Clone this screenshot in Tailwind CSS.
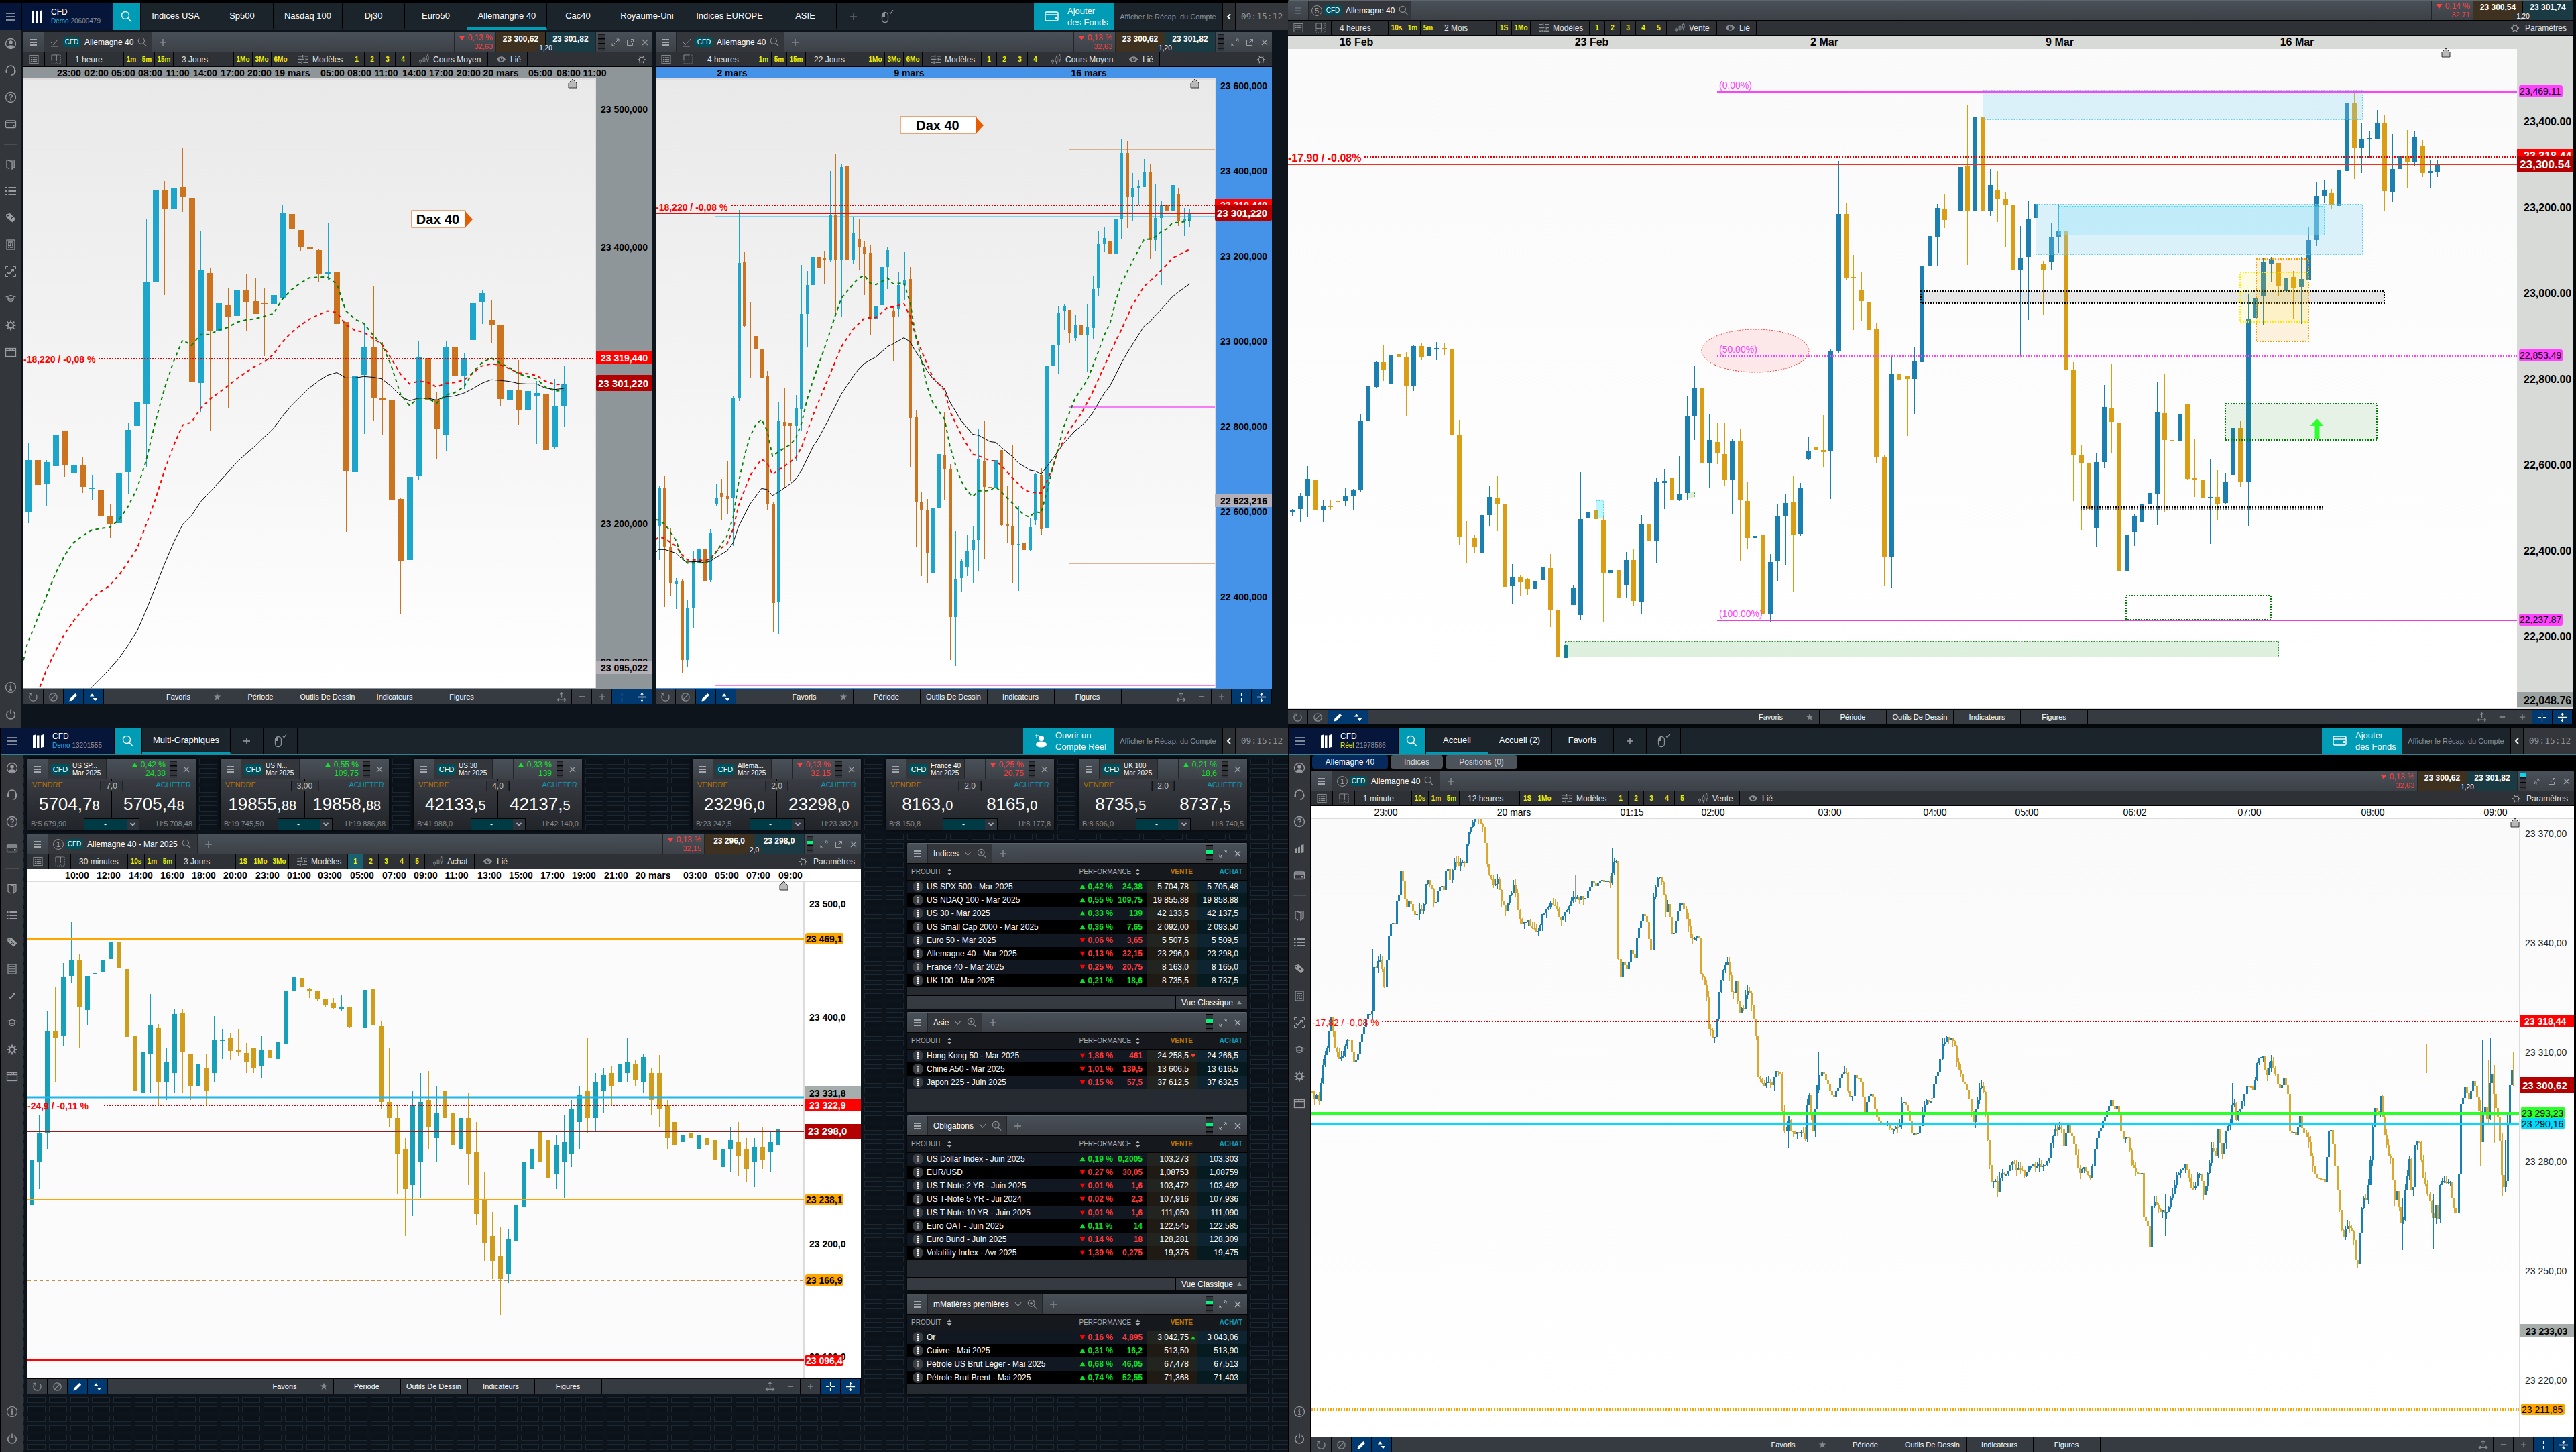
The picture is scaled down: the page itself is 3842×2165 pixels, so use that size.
<!DOCTYPE html>
<html lang="fr">
<head>
  <meta charset="UTF-8">
  <meta name="viewport" content="width=device-width, initial-scale=1.0">
  <title>Trading desk - Allemagne 40</title>
  <script src="https://cdn.jsdelivr.net/npm/@tailwindcss/browser@4"></script>
</head>
<body class="bg-black font-['Liberation_Sans',Arial,sans-serif] text-[12px] leading-4 text-white">

  <!-- icon sprite -->
  <svg class="hidden" xmlns="http://www.w3.org/2000/svg">
    <symbol id="menu" viewBox="0 0 16 16"><path d="M1 3h14M1 8h14M1 13h14" stroke="currentColor" stroke-width="1.6"/></symbol>
    <symbol id="menu-s" viewBox="0 0 12 12"><path d="M1 2h10M1 6h10M1 10h10" stroke="currentColor" stroke-width="1.6"/></symbol>
    <symbol id="logo" viewBox="0 0 18 20"><path d="M1 1.5l4-1V20H1zM7 1.5h3.500V20H7zM13 1.500l4-1.500V19l-4 1z" fill="#fff"/></symbol>
    <symbol id="search" viewBox="0 0 18 18"><circle cx="7" cy="7" r="5.500" fill="none" stroke="currentColor" stroke-width="1.400"/><path d="M11 11.500l5 5" stroke="currentColor" stroke-width="1.500"/></symbol>
    <symbol id="zoom" viewBox="0 0 18 18"><circle cx="7" cy="7" r="5.500" fill="none" stroke="currentColor" stroke-width="1.300"/><path d="M11 11.500l5 5M4.500 7h5M7 4.500v5" stroke="currentColor" stroke-width="1.300"/></symbol>
    <symbol id="plus" viewBox="0 0 12 12"><path d="M6 1v10M1 6h10" stroke="currentColor" stroke-width="1.500"/></symbol>
    <symbol id="minus" viewBox="0 0 12 12"><path d="M1 6h10" stroke="currentColor" stroke-width="2"/></symbol>
    <symbol id="close" viewBox="0 0 12 12"><path d="M2 2l8 8M10 2l-8 8" stroke="currentColor" stroke-width="1.200"/></symbol>
    <symbol id="expand" viewBox="0 0 12 12"><path d="M7 5l4-4M7.500 1H11v3.500M5 7l-4 4M1 7.500V11h3.500" fill="none" stroke="currentColor"/></symbol>
    <symbol id="shrink" viewBox="0 0 12 12"><path d="M11 1L7 5M7 1.500V5h3.500M1 11l4-4M1.500 7H5v3.500" fill="none" stroke="currentColor"/></symbol>
    <symbol id="popout" viewBox="0 0 12 12"><path d="M5 2.500H1.500v8h8V7M5.500 6.500L10.500 1.500M7 1.500h3.500V5" fill="none" stroke="currentColor"/></symbol>
    <symbol id="mouse" viewBox="0 0 20 20"><path d="M2.500 8a4.500 4.500 0 019 0v6a4.500 4.500 0 01-9 0z" fill="none" stroke="currentColor" stroke-width="1.300"/><path d="M3 10V7a4 4 0 014-3.500V10z" fill="currentColor"/><path d="M14 3l1.500 2L19 0" fill="none" stroke="currentColor" stroke-width="1.200"/></symbol>
    <symbol id="wallet" viewBox="0 0 22 18"><rect x="1" y="2" width="19" height="13" rx="2" fill="none" stroke="currentColor" stroke-width="1.400"/><path d="M1 6h19" stroke="currentColor" stroke-width="1.400"/><rect x="15" y="9" width="3" height="3" fill="currentColor"/></symbol>
    <symbol id="person-add" viewBox="0 0 20 22"><circle cx="11" cy="7" r="4" fill="currentColor"/><ellipse cx="11" cy="16" rx="8" ry="4.500" fill="currentColor"/><path d="M4 0v6M1 3h6" stroke="currentColor"/></symbol>
    <symbol id="user" viewBox="0 0 18 18"><circle cx="9" cy="9" r="7.500" fill="none" stroke="currentColor" stroke-width="1.300"/><circle cx="9" cy="7" r="2.800" fill="currentColor"/><path d="M4 13.500c1-3 9-3 10 0-2.500 3-7.500 3-10 0z" fill="currentColor"/></symbol>
    <symbol id="headset" viewBox="0 0 18 18"><path d="M3 10.500V8a6 6 0 0112 0v3c0 3-2 5-5 5" fill="none" stroke="currentColor" stroke-width="1.600"/><rect x="1.500" y="8" width="2.500" height="5" rx="1" fill="currentColor"/><rect x="14" y="8" width="2.500" height="5" rx="1" fill="currentColor"/></symbol>
    <symbol id="help" viewBox="0 0 18 18"><circle cx="9" cy="9" r="7.500" fill="none" stroke="currentColor" stroke-width="1.300"/><path d="M6.700 7.200c0-3.200 4.800-3 4.600 0-.1 1.600-2.300 1.500-2.300 3.300M9 12v1.500" fill="none" stroke="currentColor" stroke-width="1.600"/></symbol>
    <symbol id="card" viewBox="0 0 18 18"><rect x="1.500" y="4" width="15" height="10.500" rx="1.500" fill="none" stroke="currentColor" stroke-width="1.300"/><path d="M2 7h14" stroke="currentColor" stroke-width="1.500"/><rect x="12" y="10" width="2.500" height="2.500" fill="currentColor"/></symbol>
    <symbol id="bars" viewBox="0 0 18 18"><path d="M2 10l3-1v7H2zM7 7.500l3-1V16H7zM12 4l3.500-1v12L12 16z" fill="currentColor"/></symbol>
    <symbol id="book" viewBox="0 0 18 18"><path d="M3 2.500h12v10.500l-4 3V5L3 2.500v11l4 2.500" fill="none" stroke="currentColor" stroke-width="1.200"/><path d="M5 3l6 2v11l4-3V3z" fill="currentColor" opacity=".5"/></symbol>
    <symbol id="list" viewBox="0 0 18 18"><path d="M5.500 4H17M5.500 9H17M5.500 14H17M1 4h2.500M1 9h2.500M1 14h2.500" stroke="currentColor" stroke-width="1.800"/></symbol>
    <symbol id="tag" viewBox="0 0 18 18"><path d="M2 3.500L8 2l8.500 8.500-5 5L2.500 8z" fill="currentColor"/><circle cx="4.800" cy="5.200" r="1.200" fill="#33363b"/><path d="M8 7l4 4M8 10.500c2 1 1-3 4-2" stroke="#33363b" fill="none"/></symbol>
    <symbol id="calc" viewBox="0 0 18 18"><rect x="3" y="2" width="12" height="14" fill="none" stroke="currentColor" stroke-width="1.200"/><path d="M5 5h8M5 8h2M8 8h2M11 8h2M5 10.500h5M11 10.500h2M5 13h2M8 13h5" stroke="currentColor" stroke-width="1.500"/></symbol>
    <symbol id="trend" viewBox="0 0 18 18"><path d="M1.500 5V1.500H5M13 1.500h3.500V5M16.500 13v3.500H13M5 16.500H1.500V13" fill="none" stroke="currentColor"/><path d="M4 10l2.500 2.500 6-6.500" fill="none" stroke="currentColor" stroke-width="1.700"/><path d="M9.500 5H14v4z" fill="currentColor"/></symbol>
    <symbol id="grad" viewBox="0 0 18 18"><path d="M1.500 7L9 4.500 16.500 7M5 6.500v5c2 2.500 6 2.500 8 0v-5M5 9c2 1.500 6 1.500 8 0" fill="none" stroke="currentColor" stroke-width="1.300"/></symbol>
    <symbol id="gear" viewBox="0 0 18 18"><circle cx="9" cy="9" r="4" fill="none" stroke="currentColor" stroke-width="2.200"/><path d="M9 1.500v3M9 13.500v3M1.500 9h3M13.500 9h3M3.700 3.700l2 2M12.300 12.300l2 2M3.700 14.300l2-2M12.300 5.700l2-2" stroke="currentColor" stroke-width="1.800"/></symbol>
    <symbol id="window" viewBox="0 0 18 18"><rect x="1.500" y="3.500" width="15" height="12" fill="none" stroke="currentColor" stroke-width="1.300"/><path d="M1.500 6.500h15M8 4v2M11.500 4v2" stroke="currentColor" stroke-width="1.300"/></symbol>
    <symbol id="info" viewBox="0 0 18 18"><circle cx="9" cy="9" r="7.500" fill="none" stroke="currentColor" stroke-width="1.200"/><path d="M9 4.500v2M7.500 8H9v5M7 13h4" fill="none" stroke="currentColor" stroke-width="1.600"/></symbol>
    <symbol id="power" viewBox="0 0 18 18"><path d="M5.500 4.500a6.300 6.300 0 107 0M9 1.500V8" fill="none" stroke="currentColor" stroke-width="1.500"/></symbol>
    <symbol id="doc" viewBox="0 0 16 16"><rect x="1" y="1.500" width="14" height="13" fill="none" stroke="currentColor"/><path d="M3 5h2M6 5h7M3 8h2M6 8h7M3 11h2M6 11h7" stroke="currentColor" stroke-width="1.200"/></symbol>
    <symbol id="layout" viewBox="0 0 16 16"><path d="M1 1h8v8H1z" fill="none" stroke="currentColor"/><path d="M9 1h6v14H1V9M9 9v6M9 9h6" fill="none" stroke="currentColor" stroke-dasharray="1.500 1.500"/></symbol>
    <symbol id="sliders" viewBox="0 0 16 16"><path d="M0 3h6M10 3h6M0 8h9M13 8h3M0 13h4M8 13h8" stroke="currentColor" stroke-width="1.500"/><path d="M7 1v4M12 6v4M5.500 11v4" stroke="currentColor" stroke-width="1.500"/></symbol>
    <symbol id="ohlc" viewBox="0 0 16 16"><path d="M2 8v1M2 13v2M8 2v3M8 12v3M13.500 0v2M13.500 9v3" stroke="currentColor"/><path d="M.8 9.500h2.800v3H.8zM6.500 5.500h3v6h-3zM12 2.500h3v6h-3z" fill="none" stroke="currentColor"/></symbol>
    <symbol id="eye" viewBox="0 0 16 16"><path d="M1 8c3.500-6 10.500-6 14 0-3.500 6-10.500 6-14 0z" fill="currentColor"/><circle cx="8" cy="8" r="3" fill="#2e3236"/><circle cx="8.800" cy="7" r="1.300" fill="currentColor"/></symbol>
    <symbol id="cog" viewBox="0 0 16 16"><circle cx="8" cy="8" r="4.300" fill="none" stroke="currentColor" stroke-width="1.300"/><path d="M1 8h2.500M12.500 8H15M4.500 2l1.200 2M11.500 2l-1.200 2M4.500 14l1.200-2M11.500 14l-1.200-2" stroke="currentColor" stroke-width="1.500"/></symbol>
    <symbol id="undo" viewBox="0 0 16 16"><path d="M12.500 4a6 6 0 11-8.500-.5M1.500 2.500h4v4" fill="none" stroke="currentColor" stroke-width="1.500"/></symbol>
    <symbol id="ban" viewBox="0 0 16 16"><circle cx="8" cy="8" r="6" fill="none" stroke="currentColor" stroke-width="1.400"/><path d="M4 12l8-8" stroke="currentColor" stroke-width="1.400"/></symbol>
    <symbol id="pencil" viewBox="0 0 16 16"><path d="M1.500 14.500l1-4L11 2l3 3-8.500 8.500z" fill="#fff"/></symbol>
    <symbol id="updown" viewBox="0 0 16 16"><path d="M2 7l3.500-4.500L9 7zM7 9.500h7L10.500 14z" fill="#fff"/></symbol>
    <symbol id="star" viewBox="0 0 16 16"><path d="M8 1l2 5h5l-4 3.300 1.500 5.200L8 11.400l-4.500 3.100L5 9.300 1 6h5z" fill="currentColor"/></symbol>
    <symbol id="measure" viewBox="0 0 16 16"><path d="M8 1v8M5.500 3.500L8 1l2.500 2.500M2 12h12M4 9.500L1.500 12 4 14.500M12 9.500l2.500 2.500-2.500 2.500" fill="none" stroke="currentColor" stroke-width="1.500"/></symbol>
    <symbol id="cross" viewBox="0 0 16 16"><path d="M8 1v5.500M8 9.500V15M1 8h5.500M9.500 8H15" stroke="#fff" stroke-width="1.200"/></symbol>
    <symbol id="vsplit" viewBox="0 0 16 16"><path d="M1 8h14M8 1v5M8 10v5" stroke="#fff" stroke-width="1.400"/><path d="M5.500 4L8 .8 10.500 4zM5.500 12L8 15.200l2.500-3.200z" fill="#fff"/></symbol>
    <symbol id="check" viewBox="0 0 14 14"><path d="M1 7l3.500 3.500L12 2M1 13h10" fill="none" stroke="currentColor"/></symbol>
    <symbol id="chev-d" viewBox="0 0 12 12"><path d="M1 3.500L6 9l5-5.500" fill="none" stroke="currentColor" stroke-width="1.200"/></symbol>
    <symbol id="chev-d-b" viewBox="0 0 10 10"><path d="M1.500 3L5 6.500 8.500 3" fill="none" stroke="currentColor" stroke-width="1.800"/></symbol>
    <symbol id="chev-l" viewBox="0 0 10 10"><path d="M7 1L3 5l4 4" fill="none" stroke="currentColor" stroke-width="1.800"/></symbol>
    <symbol id="sort" viewBox="0 0 8 10"><path d="M4 0l3.500 4h-7zM.5 6h7L4 10z" fill="currentColor"/></symbol>
    <symbol id="tri-u" viewBox="0 0 10 10"><path d="M5 1l5 8H0z" fill="currentColor"/></symbol>
    <symbol id="tri-d" viewBox="0 0 10 10"><path d="M5 9l5-8H0z" fill="currentColor"/></symbol>
    <symbol id="dots" viewBox="0 0 16 16"><circle cx="8" cy="8" r="8" fill="#3a3d41"/><path d="M8 3v10" stroke="#fff" stroke-width="2" stroke-dasharray="1.800 1"/></symbol>
  </svg>

  <div class="grid h-screen grid-cols-2 grid-rows-[1085fr_1080fr] overflow-hidden">
    <section class="flex min-h-0 min-w-0 flex-col border-t-[5px] border-black bg-[#0d141c]">
      <div id="tl-bar"></div>
      <div class="flex min-h-0 flex-1">
        <nav id="tl-nav" class="flex w-8 flex-col bg-[#33363b] text-[#9a9da0]"></nav>
        <main class="grid min-h-0 flex-1 grid-cols-[938fr_919fr] gap-[5px] pt-[2px] pr-6 pb-[35px] pl-[3px]">
          <article id="p1" class="flex min-h-0 min-w-0 flex-col"></article>
          <article id="p2" class="flex min-h-0 min-w-0 flex-col"></article>
        </main>
      </div>
    </section>

    <section class="min-h-0 min-w-0 bg-[#05080b] pr-[5px] pb-[5px]">
      <article id="p3" class="flex h-full min-w-0 flex-col"></article>
    </section>

    <section class="flex min-h-0 min-w-0 flex-col border-l-2 border-black bg-[#0d141c]">
      <div id="bl-bar"></div>
      <div class="flex min-h-0 flex-1">
        <nav id="bl-nav" class="flex w-8 flex-col bg-[#33363b] text-[#9a9da0]"></nav>
        <main class="relative grid min-h-0 flex-1 grid-cols-[1243fr_539fr] gap-[37px] pt-[6px] pr-[61px] pb-[87px] pl-[7px]">
          <svg class="absolute inset-0 h-full w-full" aria-hidden="true">
            <defs><pattern id="cells" x="7" y="6" width="32" height="14" patternUnits="userSpaceOnUse"><rect x=".5" y=".5" width="26" height="8" fill="#0c1219" stroke="#1c2732"/></pattern></defs>
            <rect width="100%" height="100%" fill="url(#cells)"/>
          </svg>
          <div class="relative flex min-h-0 min-w-0 flex-col gap-[6px]">
            <div id="tickers-a" class="grid grid-cols-[251fr_251fr_251fr_91fr_251fr] gap-[37px]"></div>
            <article id="p4" class="flex min-h-0 flex-1 flex-col"></article>
          </div>
          <div class="relative flex min-w-0 flex-col gap-5">
            <div id="tickers-b" class="grid grid-cols-2 gap-[37px]"></div>
            <div id="lists" class="ml-8 flex flex-col gap-[5px]"></div>
          </div>
        </main>
      </div>
    </section>

    <section class="flex min-h-0 min-w-0 flex-col border-l border-black bg-black">
      <div id="br-bar"></div>
      <div class="flex min-h-0 flex-1">
        <nav id="br-nav" class="flex w-[34px] flex-col border-r-2 border-black bg-[#33363b] text-[#9a9da0]"></nav>
        <main class="flex min-h-0 min-w-0 flex-1 flex-col pr-[3px]">
          <div class="flex h-6 gap-1 px-px pt-px">
            <button class="h-5 w-[113px] rounded-sm bg-[#062a5c]">Allemagne 40</button>
            <button class="h-5 w-[78px] rounded-sm bg-[#4d535b] text-[#d8dadc]">Indices</button>
            <button class="h-5 w-[107px] rounded-sm bg-[#4d535b] text-[#d8dadc]">Positions (0)</button>
          </div>
          <article id="p5" class="flex min-h-0 flex-1 flex-col"></article>
        </main>
      </div>
    </section>
  </div>

  <script>
    const icon = (name, cls) => `<svg class="${cls} shrink-0" aria-hidden="true"><use href="#${name}"/></svg>`;
    const put = (id, html) => { document.getElementById(id).innerHTML = html; };

    // ---------- top bars ----------
    function topBar(o) {
      const tabs = o.tabs.map(([label, w, on]) => `
        <a href="#" class="${w} flex items-center justify-center border-r border-black border-b-[3px] text-[13px] ${on ? 'border-b-[#009bb5]' : 'border-b-transparent'} pt-[2px]">${label}</a>`).join('');
      return `
      <header class="flex h-10 border-b border-[#2b8394] bg-[#1c242b]">
        <button aria-label="Menu" class="${o.menuW} flex items-center justify-center border-r border-black bg-[#06153a] text-[#a9adb5]">${icon('menu', 'h-4 w-4')}</button>
        <div class="${o.logoW} flex items-center border-r border-black bg-[#06153a] pl-[13px]">
          ${icon('logo', 'h-5 w-[18px]')}
          <div class="ml-3 leading-[13px]">
            <div class="text-[12px]">CFD</div>
            <div class="text-[10px] text-[#8e939b]"><span class="${o.kindCls}">${o.kind}</span> ${o.account}</div>
          </div>
        </div>
        <button aria-label="Rechercher" class="flex w-[41px] items-center justify-center border-r border-black bg-[#009bb5]">${icon('search', 'h-[18px] w-[18px]')}</button>
        ${tabs}
        <button aria-label="Ajouter un onglet" class="${o.plusW} flex items-center justify-center border-r border-black ${o.plusCls}">${icon('plus', 'h-3 w-3')}</button>
        <button aria-label="Souris" class="flex w-[51px] items-center justify-center border-r border-black text-[#8d9296]">${icon('mouse', 'h-5 w-5')}</button>
        <div class="flex-1"></div>
        <button class="${o.ctaW} flex items-center gap-3 bg-[#009bb5] pl-4 text-left text-[13px] leading-[17px]">${icon(o.ctaIcon, o.ctaIconCls)}<span>${o.cta}</span></button>
        <a href="#" class="flex w-[163px] items-center justify-center border-r border-black text-[11px] text-[#8d9296]">Afficher le Récap. du Compte</a>
        <button aria-label="Replier" class="flex w-[19px] items-center justify-center border-r border-black bg-[#2b2e31]">${icon('chev-l', 'h-[10px] w-[10px]')}</button>
        <time class="flex w-[78px] items-center justify-center bg-[#33363b] font-['DejaVu_Sans_Mono',monospace] text-[13px] text-[#8d9296]">09:15:12</time>
      </header>`;
    }

    const fund = { cta: 'Ajouter<br>des Fonds', ctaIcon: 'wallet', ctaIconCls: 'h-[18px] w-[22px]', ctaW: 'w-[119px]' };
    put('tl-bar', topBar({ ...fund, menuW: 'w-[33px]', logoW: 'w-[136px]', kind: 'Demo', kindCls: 'text-[#1fb6e0]', account: '20600479', plusW: 'w-[50px]', plusCls: 'text-[#5f666c]',
      tabs: [['Indices USA', 'w-[105px]'], ['Sp500', 'w-[93px]'], ['Nasdaq 100', 'w-[103px]'], ['Dj30', 'w-[93px]'], ['Euro50', 'w-[93px]'], ['Allemangne 40', 'w-[119px]', 1],
        ['Cac40', 'w-[93px]'], ['Royaume-Uni', 'w-[113px]'], ['Indices EUROPE', 'w-[133px]'], ['ASIE', 'w-[93px]']] }));
    put('bl-bar', topBar({ cta: 'Ouvrir un<br>Compte Réel', ctaIcon: 'person-add', ctaIconCls: 'h-[22px] w-5', ctaW: 'w-[135px]', menuW: 'w-[33px]', logoW: 'w-[136px]',
      kind: 'Demo', kindCls: 'text-[#1fb6e0]', account: '13201555', plusW: 'w-[49px]', plusCls: 'text-[#9a9fa4]', tabs: [['Multi-Graphiques', 'w-[132px]', 1]] }));
    put('br-bar', topBar({ ...fund, menuW: 'w-[34px]', logoW: 'w-[130px]', kind: 'Réel', kindCls: 'text-[#f2f200]', account: '21978566', plusW: 'w-[49px]', plusCls: 'text-[#9a9fa4]',
      tabs: [['Accueil', 'w-[93px]', 1], ['Accueil (2)', 'w-[94px]'], ['Favoris', 'w-[93px]']] }));

    // ---------- side navigation ----------
    function sideNav(top) {
      const item = n => `<button aria-label="${n}" class="flex h-10 items-center justify-center">${icon(n, 'h-[18px] w-[18px]')}</button>`;
      return top.map(item).join('') + '<div class="mx-1.5 my-[9px] h-[2px] bg-[#4a4e53]"></div>' +
        ['book', 'list', 'tag', 'calc', 'trend', 'grad', 'gear', 'window'].map(item).join('') +
        '<div class="flex-1"></div>' + ['info', 'power'].map(item).join('');
    }
    put('tl-nav', sideNav(['user', 'headset', 'help', 'card']));
    put('bl-nav', sideNav(['user', 'headset', 'help', 'card']));
    put('br-nav', sideNav(['user', 'headset', 'help', 'bars', 'card']));

    // ---------- chart panel chrome ----------
    // signal meter: four slots, one of them may be lit
    function meter(color, slot) {
      const lines = [2, 9, 16, 23].filter(y => !(color && slot && y === 9));
      return `<svg class="h-[30px] w-[10px] shrink-0" aria-hidden="true"><rect y="3" width="10" height="25" fill="#33373c"/>
        ${lines.map(y => `<rect y="${y}" width="10" height="1.500" fill="#000"/>`).join('')}
        ${color ? `<rect y="${slot ? 10 : 3}" width="10" height="5" fill="${color}"/>` : ''}</svg>`;
    }
    const cfd = '<span class="flex h-[15px] w-[26px] shrink-0 items-center justify-center rounded bg-[#00505c] text-[10px] text-white">CFD</span>';
    const head = 'flex h-[30px] shrink-0 rounded-t-[2px] border-t border-[#5f656d] bg-linear-to-b from-[#4a5058] to-[#3c4147]';

    function panelHead(o) {
      const mark = o.mark ? `<span class="flex h-4 w-4 shrink-0 items-center justify-center rounded-full border border-[#8d9296] text-[11px] text-[#a5a9ad]">${o.mark}</span>` : icon('check', 'mr-[2px] h-[14px] w-[14px]');
      return `
      <div class="border-b border-black"><div class="${head}">
        <button aria-label="Menu du graphique" class="flex w-[31px] items-center justify-center border-r border-[#22262a] ${o.dim ? 'text-[#6a6f75]' : 'text-[#c4c7ca]'}">${icon('menu-s', 'h-3 w-3')}</button>
        <div class="${o.tabW} flex items-center gap-[3px] border-r border-[#22262a] bg-[#33373c] text-[#8d9296]">${mark}${cfd}<span class="ml-[3px] whitespace-nowrap text-white">${o.title}</span>${icon('search', 'ml-[3px] h-[15px] w-[15px]')}</div>
        <div class="flex flex-1 items-center pl-[10px] text-[#85898e]">${o.plain ? '' : icon('plus', 'h-3 w-3')}</div>
        <div class="flex w-[63px] flex-col justify-center border-r border-l border-[#22262a] pr-1 text-right leading-[13px] text-[#ff4040]">
          <div class="flex items-center justify-end gap-1">${icon('tri-d', 'h-[9px] w-[10px]')}<span>${o.pct}</span></div><div class="text-[11px]">${o.delta}</div>
        </div>
        <div class="relative grid w-[148px] grid-cols-2 font-bold">
          <button class="flex items-start justify-center border-r border-black bg-[#3f3120] pt-[2px]">${o.sell}</button>
          <button class="flex items-start justify-center bg-[#1b3b44] pt-[2px]">${o.buy}</button>
          <span class="absolute bottom-0 left-1/2 flex h-[10px] -translate-x-1/2 items-center rounded-t-[3px] bg-[#2b333d] px-[3px] text-[10px] font-normal">${o.spread}</span>
        </div>
        ${o.plain ? '' : `<div class="flex w-[85px] items-start gap-[10px] border-l border-[#22262a] pl-[3px] text-[#9da1a5]">${meter(o.lamp, o.slot)}
          <div class="flex h-full items-center gap-[10px]">${icon(o.size || 'expand', 'h-3 w-3')}${icon('popout', 'h-3 w-3')}${icon('close', 'h-3 w-3')}</div></div>`}
      </div></div>`;
    }

    function toolBar(o) {
      const cell = 'flex items-center border-r border-black';
      const drop = t => `<button aria-haspopup="listbox" class="${cell} w-[85px] pl-3">${t}</button>`;
      const drop2 = t => `<button aria-haspopup="listbox" class="${cell} w-[90px] pl-3">${t}</button>`;
      const quickW = t => t.endsWith('0s') ? 'w-[25px]' : t.length > 2 ? 'w-7' : 'w-[23px]';
      const quick = (t, on) => `<button class="${cell} ${quickW(t)} justify-center text-[10px] font-bold text-[#f4f000] ${on ? 'bg-[#1a6070]' : ''}">${t}</button>`;
      return `
      <div class="flex h-[22px] shrink-0 border-b border-black bg-[#2e3236] text-[#e4e6e8]">
        <button aria-label="Liste" class="${cell} w-8 justify-center text-[#8d9296]">${icon('doc', 'h-[15px] w-[15px]')}</button>
        <button aria-label="Disposition" class="${cell} w-[33px] justify-center text-[#8d9296]">${icon('layout', 'h-[15px] w-[15px]')}</button>
        ${drop(o.unit)}${o.q1.map(t => quick(t, false)).join('')}${drop2(o.range)}${o.q2.map(t => quick(t, false)).join('')}
        <button class="${cell} w-[88px] gap-1.5 pl-3">${icon('sliders', 'h-[15px] w-[15px] text-[#8d9296]')}Modèles</button>
        ${o.models.map(n => quick(String(n), n === o.on)).join('')}
        <button class="${cell} ${o.modeW} gap-1.5 pl-3">${icon('ohlc', 'h-[15px] w-[15px] text-[#8d9296]')}${o.mode}</button>
        <button class="${cell} w-[59px] gap-1.5 pl-3">${icon('eye', 'h-[15px] w-[15px] text-[#8d9296]')}Lié</button>
        <div class="flex-1"></div>
        <button class="flex items-center gap-2 pr-[9px]" aria-label="Paramètres">${icon('cog', 'h-[14px] w-[14px] text-[#a0a4a8]')}${o.params ? 'Paramètres' : ''}</button>
      </div>`;
    }

    function footBar() {
      const b = (n, on, size) => `<button aria-label="${n}" class="flex w-[30px] items-center justify-center border-r border-black ${on ? 'bg-[#003a70]' : 'text-[#85898e]'}">${icon(n, size || 'h-[15px] w-[15px]')}</button>`;
      const t = (s) => `<button class="w-[100px] border-r border-black">${s}</button>`;
      return `
      <div class="flex h-[23px] shrink-0 justify-between border-t border-black bg-[#363b41] text-[11px]">
        <div class="flex">${b('undo')}${b('ban')}${b('pencil', 1)}${b('updown', 1)}</div>
        <div class="flex">
          <button class="flex w-[100px] items-center justify-end gap-[34px] border-r border-black pr-2">Favoris${icon('star', 'h-3 w-3 text-[#85898e]')}</button>
          ${t('Période')}${t('Outils De Dessin')}${t('Indicateurs')}${t('Figures')}
        </div>
        <div class="flex">${b('measure')}${b('minus', 0, 'h-[10px] w-[10px]')}${b('plus', 0, 'h-[10px] w-[10px]')}${b('cross', 1)}${b('vsplit', 1)}</div>
      </div>`;
    }

    // ---------- chart drawing ----------
    const R = Math.round;
    const text = (x, y, s, size, o = {}) => `<text x="${x}" y="${R(y + size * 0.36)}" font-size="${size}" font-weight="${o.b ? 700 : 400}" fill="${o.c || '#000'}" text-anchor="${o.a || 'start'}">${s}</text>`;
    const rect = (x, y, w, h, fill, extra = '') => `<rect x="${x}" y="${y}" width="${w}" height="${h}" fill="${fill}" ${extra}/>`;
    const line = (x1, x2, y, c, w = 1, dash = '') => `<path d="M${x1} ${y}H${x2}" stroke="${c}" stroke-width="${w}" ${dash ? `stroke-dasharray="${dash}"` : ''} fill="none"/>`;
    const house = (x, y) => `<path d="M${x - 6} ${y + 6}v-7l6-6 6 6v7z" fill="#b9b9b9" stroke="#333"/>`;
    const zone = (x1, y1, x2, y2, fill, stroke, dash = '2 2', w = 1) => `<rect x="${x1}" y="${y1}" width="${x2 - x1}" height="${y2 - y1}" fill="${fill}" stroke="${stroke}" stroke-width="${w}" stroke-dasharray="${dash}"/>`;
    const daxTag = (x1, x2, y) => `<path d="M${x2} ${y}l12 13-12 13z" fill="#e65c00"/><rect x="${x1 + 1}" y="${y}" width="${x2 - x1}" height="25" fill="#fff" stroke="#e65c00"/>` + text((x1 + x2) / 2, y + 13, 'Dax 40', 20, { b: 1, a: 'middle' });

    // rows: "high top bottom low u|d", evenly spaced
    function candles(data, m, up, down, w) {
      return data.trim().split(/\s*;\s*/).filter(Boolean).map((row, i) => {
        const [hi, top, bot, lo, dir] = row.split(' ');
        const c = dir === 'u' ? up : down;
        const x = R(m.x + i * m.step), y = v => R(m.y + v / m.k);
        return rect(x, y(hi), 1, Math.max(1, y(lo) - y(hi)), c) + rect(x - (w - 1) / 2, y(top), w, Math.max(1, y(bot) - y(top)), c);
      }).join('');
    }
    function curve(data, m, c, w, dash) {
      const pts = data.trim().split(' ').map(p => { const [x, y] = p.split(','); return `${(m.ox + x / m.kx).toFixed(1)},${(m.y + y / m.k).toFixed(1)}`; }).join(' ');
      return `<polyline points="${pts}" fill="none" stroke="${c}" stroke-width="${w}" ${dash ? `stroke-dasharray="${dash}"` : ''}/>`;
    }
    // narrow candles that follow a price path
    function pathCandles(data, m, step, w, up, down, wick) {
      const pts = data.trim().split(' ').map(p => p.split(',').map(Number));
      let out = '', k = 0, prev = pts[0][1];
      for (let x = pts[0][0], i = 0; x <= pts[pts.length - 1][0]; x += step, i++) {
        while (k < pts.length - 2 && pts[k + 1][0] < x) k++;
        const [x1, y1] = pts[k], [x2, y2] = pts[k + 1];
        const y = y1 + (y2 - y1) * Math.min(1, (x - x1) / (x2 - x1)) + Math.sin(i * i * 2.3) * wick * 0.5;
        const a = m.y + Math.min(prev, y) / m.k, b = m.y + Math.max(prev, y) / m.k;
        const c = y < prev ? up : down, px = R(m.ox + x / m.kx);
        const hi = Math.abs(Math.sin(i * 12.9)) ** 5 * wick, lo = Math.abs(Math.sin(i * 7.7)) ** 5 * wick;
        out += rect(px, R(a - hi), 1, Math.max(2, R(b + lo) - R(a - hi)), c) + rect(px - (w - 1) / 2, R(a), w, Math.max(2, R(b) - R(a)), c);
        prev = y;
      }
      return out;
    }
    // everything is drawn in desk coordinates, shifted to the chart's corner
    function chart(ox, oy, body) {
      return `<svg class="block min-h-0 w-full flex-1 font-['Liberation_Sans',Arial,sans-serif]" role="img" aria-label="Graphique Allemagne 40"><g transform="translate(${-ox} ${-oy})">${body}</g></svg>`;
    }
    const grad = (id, a, b) => `<defs><linearGradient id="${id}" x1="0" y1="0" x2="0" y2="1"><stop offset="0" stop-color="${a}"/><stop offset="1" stop-color="${b}"/></linearGradient></defs>`;
    const dates = (list, y, size, b) => list.map(([x, s]) => text(x, y, s, size, { b, a: 'middle' })).join('');

    const quote = { pct: '0,13 %', delta: '32,63', sell: '23 300,62', buy: '23 301,82', spread: '1,20' };

    // Allemagne 40, 1 heure
    const m1 = { x: 42, step: 13.54, y: 0, k: 2.9037, ox: 0, kx: 1.6 };
    const c1 = `1916 1992 2218 2265 u;1908 1992 2099 2120 d;1992 2001 2096 2189 u;1853 1882 2018 2044 u;1867 1867 2012 2065 d;1995 2012 2050 2114 u;1977 2015 2108 2134 d;2056 2114 2117 2166 u;2114 2120 2236 2279 d;2184 2233 2268 2329 d;
      2038 2047 2265 2271 u;1829 1861 2044 2137 u;1725 1739 1844 2111 u;950 1222 1751 2024 u;606 822 1220 1269 u;784 825 906 1278 d;716 813 903 1135 u;638 810 854 918 d;857 857 1655 1748 d;999 1170 1658 1785 u;
      1161 1182 1434 1867 d;1089 1312 1432 1475 u;1246 1321 1371 1768 d;1132 1257 1368 1541 u;1188 1257 1310 1432 d;1202 1304 1359 1359 d;1246 1312 1318 1541 d;1252 1278 1315 1411 u;886 923 1289 1295 u;920 926 993 1074 d;
      996 996 1069 1086 d;1013 1069 1080 1101 d;1078 1083 1185 1220 d;964 1176 1188 1214 u;1156 1179 1402 1533 d;1394 1394 2038 2303 d;1539 1626 2044 2183 u;1397 1501 1623 1879 u;1237 1501 1725 1824 d;1480 1722 1731 1882 d;
      1696 1731 2163 2294 d;2157 2160 2430 2657 d;1945 2065 2425 2427 u;1478 1548 2059 2076 u;1545 1550 1731 1806 d;1699 1731 1858 1989 d;1475 1501 1882 1950 u;1176 1504 1629 1855 d;1530 1551 1626 1684 u;1170 1312 1472 1527 u;
      1254 1269 1307 1402 u;1298 1385 1408 1484 d;1405 1405 1728 1760 d;1591 1690 1734 1734 u;1559 1687 1777 1841 d;1675 1693 1774 1831 u;1650 1702 1713 1922 u;1583 1707 1948 1974 d;1641 1757 1934 1945 u;1583 1664 1760 1846 u`;
    const g1 = '56,2858 65,2790 89,2680 111,2580 132,2485 154,2405 175,2350 197,2320 219,2295 241,2288 262,2283 284,2250 305,2195 327,2115 348,2000 370,1830 393,1680 414,1565 436,1472 457,1495 479,1448 500,1448 522,1428 543,1418 565,1395 587,1385 609,1380 630,1370 652,1358 674,1295 695,1255 717,1225 738,1203 761,1200 781,1199 804,1230 825,1345 847,1382 868,1400 890,1450 911,1490 933,1580 956,1708 977,1755 999,1725 1020,1725 1042,1745 1063,1710 1085,1700 1107,1675 1129,1610 1149,1572 1172,1550 1193,1572 1215,1590 1237,1618 1258,1630 1281,1640 1301,1675 1324,1693 1345,1690';
    const r1 = '95,2975 111,2900 132,2820 154,2745 175,2690 197,2640 219,2590 241,2560 262,2535 284,2490 305,2435 327,2375 348,2275 370,2165 393,2035 414,1930 436,1840 457,1828 479,1768 500,1730 522,1700 543,1672 565,1640 587,1612 609,1585 630,1567 652,1535 674,1480 695,1440 717,1408 738,1382 761,1362 781,1346 804,1353 825,1405 847,1430 868,1438 890,1465 911,1490 933,1550 956,1620 977,1662 999,1650 1020,1655 1042,1675 1063,1660 1085,1656 1107,1645 1129,1615 1149,1585 1172,1575 1193,1580 1215,1595 1237,1615 1258,1618 1281,1626 1301,1650 1324,1665 1345,1663';
    const b1 = '218,2978 241,2935 262,2895 284,2850 305,2795 327,2733 348,2645 370,2545 393,2440 414,2350 436,2270 457,2232 479,2172 500,2132 522,2088 543,2046 565,2002 587,1965 609,1930 630,1893 652,1856 674,1802 695,1757 717,1718 738,1680 761,1648 781,1625 804,1613 825,1636 847,1636 868,1630 890,1633 911,1640 933,1672 956,1715 977,1735 999,1724 1020,1724 1042,1732 1063,1718 1085,1714 1107,1702 1129,1682 1149,1660 1172,1644 1193,1647 1215,1651 1237,1660 1258,1662 1281,1662 1301,1680 1324,1686 1345,1682';
    const d1 = [[103, '23:00'], [144, '02:00'], [184, '05:00'], [224, '08:00'], [265, '11:00'], [306, '14:00'], [347, '17:00'], [387, '20:00'], [436, '19 mars'], [496, '05:00'], [536, '08:00'], [576, '11:00'], [618, '14:00'], [658, '17:00'], [699, '20:00'], [747, '20 mars'], [806, '05:00'], [848, '08:00'], [887, '11:00']];
    put('p1', panelHead({ ...quote, title: 'Allemagne 40', tabW: 'w-[161px] pl-[9px]' }) +
      toolBar({ unit: '1 heure', q1: ['1m', '5m', '15m'], range: '3 Jours', q2: ['1Mo', '3Mo', '6Mo'], models: [1, 2, 3, 4], mode: 'Cours Moyen', modeW: 'w-[115px]' }) +
      chart(35, 100, grad('bg1', '#e9e9e9', '#ffffff') +
        rect(35, 100, 938, 940, '#8f9699') + rect(35, 117, 854, 2, '#dedcdc') + rect(35, 119, 852, 907, 'url(#bg1)') + rect(887, 117, 2, 909, '#dedcdc') +
        dates(d1, 109, 14, 1) +
        candles(c1, m1, '#1ea5cc', '#cc7320', 9) +
        curve(b1, m1, '#000', 1) + curve(r1, m1, '#f00', 2, '5 5') + curve(g1, m1, '#008000', 2, '5 5') +
        line(147, 887, 534.5, '#d00', 1, '2 2') + line(35, 887, 572.5, '#e01010', 1) +
        text(35, 536, '-18,220 / -0,08 %', 14, { b: 1, c: '#f00' }) + daxTag(613, 693, 314) + house(854, 125) +
        text(896, 163, '23 500,000', 14, { b: 1 }) + text(896, 369, '23 400,000', 14, { b: 1 }) + text(896, 781, '23 200,000', 14, { b: 1 }) + text(896, 987, '23 100,000', 14, { b: 1 }) +
        rect(889, 985, 84, 20, '#b5afb8') + text(896, 996, '23 095,022', 14, { b: 1 }) +
        rect(889, 524, 84, 19, '#f00') + text(896, 534, '23 319,440', 14, { b: 1, c: '#fff' }) +
        rect(889, 559, 84, 24, '#b30000', 'rx="2"') + text(892, 572, '23 301,220', 15, { b: 1, c: '#fff' })) +
      footBar());

    // Allemagne 40, 4 heures
    const m2 = { x: 982.6, step: 8.512, y: 0, k: 2.9037, ox: 960, kx: 1.6333 };
    const c2 = `2102 2111 2279 2425 u;2059 2114 2369 2628 d;2285 2369 2526 2578 d;2503 2515 2529 2637 u;2509 2515 2857 2915 d;2596 2631 2857 2886 u;2384 2433 2631 2718 u;2340 2378 2436 2645 u;2262 2378 2515 2761 d;2291 2308 2512 2520 u;
      2094 2155 2184 2192 u;2073 2134 2152 2250 d;1998 2149 2160 2224 d;1716 1725 2157 2364 u;909 1138 1725 1736 u;1089 1135 1411 1417 d;1307 1405 1408 1635 d;1382 1455 1510 1594 d;1400 1513 1635 1658 d;1606 1629 2184 2207 d;
      2172 2184 2610 2738 d;1742 1824 2608 2744 u;1681 1826 1844 2113 d;1829 1829 1844 2082 d;1710 1768 1844 1995 u;1147 1359 1771 1867 u;1173 1234 1359 1504 u;1066 1112 1234 1362 u;1054 1112 1159 1193 d;1086 1115 1124 1228 d;
      740 932 1124 1135 u;668 932 1127 1356 d;711 723 1127 1373 u;601 720 1124 1193 d;938 1008 1127 1144 u;947 1034 1069 1170 d;1042 1069 1101 1278 d;1063 1095 1379 1452 d;1188 1324 1379 1745 u;1077 1156 1321 1594 u;
      1069 1083 1156 1251 u;1333 1344 1371 1564 d;1176 1234 1336 1373 u;1089 1211 1234 1300 u;1156 1208 1809 2021 d;1774 1806 2172 2369 d;2128 2175 2207 2494 d;2160 2210 2396 2526 d;2160 2201 2483 2567 u;1870 1966 2201 2227 u;
      1783 1972 2030 2163 d;2010 2033 2671 2857 d;2300 2509 2671 2883 u;2422 2427 2503 2564 u;2317 2384 2454 2494 u;2279 2337 2381 2523 u;1858 1989 2337 2474 u;1824 1995 2108 2419 d;1998 2108 2114 2279 d;1986 1992 2114 2175 u;
      1948 1948 2274 2279 d;2102 2271 2279 2349 d;1928 2279 2361 2526 d;2192 2355 2361 2558 u;2242 2352 2381 2454 d;2245 2282 2381 2387 u;2050 2053 2253 2274 u;2027 2056 2291 2314 d;1480 1585 2288 2477 u;1382 1495 1583 1690 u;
      1324 1353 1493 1617 u;1315 1324 1347 1429 u;1342 1342 1443 1484 d;1362 1408 1463 1475 u;1379 1405 1452 1585 d;1318 1417 1452 1609 u;1196 1251 1420 1469 u;1002 1057 1249 1281 u;984 1031 1057 1089 u;1022 1042 1101 1112 d;
      944 947 1101 1132 u;601 662 950 1037 u;609 662 854 987 d;749 816 854 958 u;781 804 813 889 u;688 743 810 810 u;711 746 1040 1121 d;796 944 1040 1086 u;868 889 944 1234 u;775 889 915 1025 d;
      775 801 912 932 u;813 839 958 979 d;900 950 958 1022 u;903 924 955 981 u`;
    const g2 = '29,2250 37,2252 51,2268 64,2300 79,2340 92,2410 107,2438 135,2436 148,2438 162,2425 175,2395 203,2320 218,2240 231,2090 246,1970 259,1890 273,1840 287,1815 301,1865 314,1976 329,1955 357,1925 370,1900 385,1830 398,1730 412,1650 427,1575 440,1510 455,1430 468,1360 482,1290 510,1230 523,1205 538,1192 551,1225 566,1232 579,1220 594,1203 607,1228 634,1225 649,1310 662,1450 677,1560 690,1670 705,1745 733,1815 746,1930 760,2015 773,2080 788,2125 801,2150 816,2125 844,2124 857,2107 871,2130 899,2180 912,2205 927,2230 940,2238 955,2215 968,2222 982,2130 995,2035 1010,1940 1023,1850 1051,1725 1079,1650 1093,1590 1108,1520 1121,1455 1136,1400 1149,1310 1163,1230 1191,1130 1219,1037 1232,1035 1247,1025 1260,1005 1275,990 1288,965 1302,963 1316,960 1330,952';
    const r2 = '29,2337 37,2325 51,2330 79,2365 92,2400 107,2424 135,2424 148,2428 162,2420 175,2390 203,2355 218,2290 231,2190 259,2060 287,1988 301,2005 314,2055 329,2035 357,2000 370,1983 385,1935 412,1800 440,1680 468,1560 482,1500 510,1425 538,1377 566,1375 579,1355 594,1330 607,1330 634,1315 649,1370 662,1450 677,1520 690,1575 705,1635 733,1690 746,1780 773,1880 801,1967 816,1973 844,1995 857,1995 871,2015 899,2070 927,2120 940,2130 968,2135 982,2085 995,2030 1010,1950 1038,1860 1066,1790 1093,1700 1121,1590 1149,1480 1163,1430 1191,1320 1219,1240 1247,1195 1275,1145 1288,1117 1330,1080';
    const b2 = '29,2392 37,2379 51,2379 64,2386 79,2395 92,2420 107,2433 135,2431 148,2437 162,2430 175,2415 203,2385 218,2350 231,2280 259,2182 287,2115 301,2119 314,2145 329,2130 357,2095 370,2075 385,2035 412,1935 427,1895 455,1800 482,1705 510,1630 523,1600 538,1573 566,1545 594,1500 607,1490 621,1475 634,1462 649,1480 662,1520 677,1560 690,1605 705,1640 733,1683 746,1740 773,1820 801,1880 816,1885 844,1912 857,1915 899,1978 912,2003 940,2035 955,2040 968,2053 995,1990 1023,1920 1051,1865 1066,1845 1079,1820 1093,1790 1121,1705 1136,1670 1149,1625 1165,1568 1177,1530 1219,1412 1232,1395 1260,1340 1288,1285 1302,1265 1330,1229';
    put('p2', panelHead({ ...quote, title: 'Allemagne 40', tabW: 'w-[161px] pl-[9px]' }) +
      toolBar({ unit: '4 heures', q1: ['1m', '5m', '15m'], range: '22 Jours', q2: ['1Mo', '3Mo', '6Mo'], models: [1, 2, 3, 4], mode: 'Cours Moyen', modeW: 'w-[115px]' }) +
      chart(978, 100, grad('bg2', '#e9e9e9', '#ffffff') +
        rect(978, 100, 919, 940, '#4593e8') + rect(978, 117, 835, 2, '#dedcdc') + rect(978, 119, 834, 907, 'url(#bg2)') + rect(1812, 117, 1, 909, '#dedcdc') +
        dates([[1092, '2 mars'], [1356, '9 mars'], [1624, '16 mars']], 109, 14, 1) +
        line(1067, 1812, 323, '#7fd3f0', 2) + line(1595, 1812, 223, '#dcae86', 2) + line(1595, 1812, 607, '#f77cf7', 2) + line(1595, 1812, 840, '#dfb38f', 2) + line(1067, 1812, 1022, '#f77cf7', 2) +
        candles(c2, m2, '#1ea5cc', '#cc7320', 5) +
        curve(b2, m2, '#000', 1) + curve(r2, m2, '#f00', 2, '5 5') + curve(g2, m2, '#008000', 2, '5 5') +
        line(1091, 1812, 306.5, '#d00', 1, '2 2') + line(978, 1812, 318.5, '#e01010', 1) +
        text(978, 309, '-18,220 / -0,08 %', 14, { b: 1, c: '#f00' }) + daxTag(1342, 1455, 174) + house(1782, 125) +
        [['600', 128], ['400', 255], ['200', 382]].map(([p, y]) => text(1820, y, `23 ${p},000`, 14, { b: 1 })).join('') + text(1820, 509, '23 000,000', 14, { b: 1 }) +
        [['800', 636], ['600', 763], ['400', 890]].map(([p, y]) => text(1820, y, `22 ${p},000`, 14, { b: 1 })).join('') +
        rect(1812, 736, 85, 20, '#b5afb8') + text(1820, 747, '22 623,216', 14, { b: 1 }) +
        rect(1812, 296, 85, 20, '#f00') + text(1820, 306, '23 319,440', 14, { b: 1, c: '#fff' }) +
        rect(1812, 305, 85, 24, '#b30000', 'rx="2"') + text(1815, 318, '23 301,220', 15, { b: 1, c: '#fff' })) +
      footBar());

    // Allemagne 40, 4 heures, 2 mois
    const m3 = { x: 1927.3, step: 11.312, y: 0, k: 1.4519 };
    const c3 = `1102 1105 1108 1117 u;1067 1073 1102 1130 u;1009 1037 1074 1119 u;1029 1038 1105 1119 d;1082 1096 1105 1131 u;1083 1095 1097 1104 d;1082 1085 1088 1102 d;1057 1074 1085 1096 u;1058 1061 1074 1105 u;896 912 1060 1064 u;
      835 836 912 921 u;781 784 838 841 u;746 784 801 825 d;757 768 832 832 u;746 767 773 812 d;762 774 835 902 d;748 749 835 846 u;744 749 773 780 d;742 751 771 775 u;740 753 757 779 u;
      742 754 757 768 d;695 755 942 992 d;909 942 1163 1181 d;1128 1161 1163 1218 d;1157 1164 1183 1196 d;1109 1115 1198 1202 u;1053 1076 1115 1140 u;1029 1077 1090 1150 d;1067 1090 1270 1273 d;1221 1249 1269 1308 u;
      1246 1249 1260 1291 d;1251 1254 1275 1288 d;1221 1259 1275 1292 u;1198 1228 1256 1318 u;1199 1230 1320 1357 d;1276 1320 1423 1453 d;1388 1397 1424 1430 u;1266 1273 1310 1310 u;1022 1124 1331 1343 u;1070 1108 1122 1154 u;
      1072 1105 1124 1339 d;1118 1125 1240 1346 d;1161 1234 1240 1246 u;1230 1234 1294 1308 d;1195 1212 1267 1294 u;1189 1212 1301 1312 d;1115 1135 1302 1328 u;1028 1135 1172 1254 d;1035 1044 1170 1220 u;1016 1041 1045 1102 u;
      1035 1035 1082 1095 d;987 1070 1083 1085 u;858 900 1067 1083 u;791 841 900 952 u;814 839 1003 1021 d;898 952 1003 1057 u;915 957 981 1005 d;916 983 1038 1053 d;950 954 1040 1112 u;928 955 1083 1214 d;
      1042 1085 1164 1189 d;1154 1160 1164 1218 u;1157 1159 1330 1360 d;1199 1217 1330 1346 u;1092 1116 1215 1259 u;1069 1089 1117 1222 u;1029 1087 1157 1282 d;1045 1057 1156 1160 u;947 977 993 996 u;935 968 974 1025 d;
      899 974 979 1012 d;755 759 977 1080 u;348 463 759 765 u;438 463 601 605 d;552 600 603 714 d;588 627 652 695 d;597 653 714 726 d;698 711 990 1002 d;984 990 1205 1269 d;768 810 1205 1273 u;
      738 810 822 955 d;813 814 820 944 d;752 781 820 896 u;467 575 784 830 u;482 511 575 648 u;442 450 513 576 u;421 452 476 494 d;438 456 458 510 d;263 362 457 460 u;226 360 457 573 d;
      249 254 457 582 u;194 254 457 491 d;366 401 457 467 u;370 413 430 481 d;417 431 443 534 d;425 443 585 621 d;489 558 585 769 u;434 473 556 693 u;429 441 472 521 u;565 571 584 682 d;
      484 513 566 584 u;441 501 514 547 u;473 499 801 907 d;784 800 984 1085 d;963 986 1003 1147 d;980 1003 1102 1166 d;980 1000 1144 1183 u;834 881 1000 1013 u;788 884 913 980 d;904 915 1236 1330 d;
      1050 1159 1236 1341 u;1112 1116 1151 1182 u;1058 1092 1130 1149 u;1040 1067 1092 1163 u;826 893 1069 1137 u;809 894 952 1108 d;900 952 955 1038 d;893 897 955 987 u;874 874 1037 1039 d;950 1035 1040 1076 d;
      861 1038 1079 1163 d;995 1076 1079 1177 u;1018 1076 1090 1127 d;1023 1042 1089 1092 u;925 926 1028 1035 u;912 927 1044 1054 d;636 690 1044 1138 u;640 645 688 741 u;558 568 642 704 u;556 560 571 611 u;
      569 569 620 640 d;578 601 630 650 u;586 600 623 690 d;556 604 621 701 u;492 520 605 605 u;395 424 520 533 u;389 412 424 438 u;409 418 445 453 d;366 367 446 462 u;194 224 370 412 u;
      200 224 319 388 d;266 301 319 374 u;285 299 301 342 u;238 267 301 301 u;249 267 414 456 d;290 366 415 437 u;328 338 366 511 u;282 338 350 407 d;283 298 350 360 u;304 315 375 384 d;
      345 370 375 407 u;345 357 372 384 u`;
    const magTag = (y, s) => rect(3757, y - 9, 65, 18, '#ff40ff', 'rx="3"') + text(3758, y, s, 14);
    put('p3', panelHead({ pct: '0,14 %', delta: '32,71', sell: '23 300,54', buy: '23 301,74', spread: '1,20', title: 'Allemagne 40', tabW: 'w-[153px] pl-[4px]', mark: 5, plain: 1, dim: 1 }) +
      toolBar({ unit: '4 heures', q1: ['10s', '1m', '5m'], range: '2 Mois', q2: ['1S', '1Mo'], models: [1, 2, 3, 4, 5], mode: 'Vente', modeW: 'w-[75px]', params: 1 }) +
      chart(1921, 53, grad('bg3', '#fafafa', '#ffffff') +
        rect(1921, 53, 1920, 1010, '#d7dad7') + rect(1921, 73, 1833, 983, 'url(#bg3)') +
        dates([[2023, '16 Feb'], [2374, '23 Feb'], [2721, '2 Mar'], [3072, '9 Mar'], [3426, '16 Mar']], 62, 16, 1) +
        candles(c3, m3, '#1b7fb0', '#d99e14', 7) +
        zone(2957.5, 134.5, 3523.5, 178.5, 'rgba(135,215,245,.28)', '#5ccbe8') +
        zone(3036.5, 304.5, 3523.5, 379.5, 'rgba(135,215,245,.28)', '#5ccbe8') +
        zone(3070.5, 307.5, 3466.5, 350.5, 'rgba(150,225,250,.38)', '#30d5f0') +
        zone(2865, 434, 3556, 452, 'rgba(0,0,0,.09)', '#000', '2 2', 2) +
        zone(3341, 406, 3443, 480, 'rgba(255,255,60,.13)', '#ffef00', '2 2', 2) +
        zone(3365, 386, 3443, 509, 'rgba(255,165,0,.12)', '#ff9c00', '2 2', 2) +
        zone(3319, 602, 3545, 656, 'rgba(0,128,0,.09)', '#008000', '2 2', 2) +
        zone(3171, 888, 3387, 924, 'none', '#008000', '2 2', 2) +
        zone(2334.5, 956.5, 3398.5, 979.5, 'rgba(0,140,0,.13)', '#1b8a1b') +
        zone(2380.5, 746.5, 2391.5, 772.5, 'rgba(0,225,255,.25)', '#1fd8f2') + zone(2516.5, 733.5, 2527.5, 742.5, 'rgba(0,140,0,.13)', '#1b8a1b') +
        line(3103, 3466, 756, '#000', 2, '2 2') + line(3103, 3466, 759, '#000', 1, '2 2') +
        `<path d="M3455.500 624l10 11h-6v19h-8v-19h-6z" fill="#2cff2c"/>` +
        `<ellipse cx="2618" cy="523" rx="80" ry="32" fill="rgba(255,0,0,.08)" stroke="#f22" stroke-dasharray="2 2"/>` +
        line(2561, 3754, 137, '#ff40ff', 2) + line(2561, 3754, 531, '#ff40ff', 2, '2 2') + line(2561, 3754, 925, '#e63fe6', 2) +
        text(2564, 127, '(0.00%)', 14, { c: '#ff40ff' }) + text(2564, 521, '(50.00%)', 14, { c: '#ff40ff' }) + text(2564, 915, '(100.00%)', 14, { c: '#ff40ff' }) +
        line(2035, 3754, 234, '#e00', 2, '2 2') + line(1921, 3754, 245.5, '#f2301c', 1) +
        text(1921, 235, '-17.90 / -0.08%', 16, { b: 1, c: '#f00' }) + house(3648, 79) +
        ['23,400.00', '23,200.00', '23,000.00', '22,800.00', '22,600.00', '22,400.00', '22,200.00'].map((s, i) => text(3764, 181 + i * 128, s, 16, { b: 1 })).join('') +
        magTag(136, '23,469.11') + magTag(530, '22,853.49') + magTag(924, '22,237.87') +
        rect(3754, 1032, 84, 22, '#9aa3a0') + text(3764, 1044, '22,048.76', 16, { b: 1 }) +
        rect(3754, 222, 84, 20, '#f00') + text(3764, 232, '23,318.44', 16, { b: 1, c: '#fff' }) +
        rect(3754, 232, 84, 25, '#b30000') + text(3758, 245, '23,300.54', 17, { b: 1, c: '#fff' })) +
      footBar());

    // Allemagne 40 - Mar 2025, 30 minutes
    const m4 = { x: 46.6, step: 11.85, y: 1080, k: 3 };
    const c4 = `1900 1950 2150 2200 u;1750 1830 1960 2080 u;1284 1374 1830 1900 u;1174 1371 1401 1600 d;1068 1131 1395 1437 u;882 1056 1125 1155 u;1026 1056 1266 1446 d;1125 1128 1278 1347 u;969 1113 1119 1212 u;1011 1056 1110 1329 u;
      942 975 1050 1140 u;909 972 1089 1134 d;1095 1095 1398 1470 d;1377 1392 1640 1690 d;1446 1467 1650 1700 u;1206 1347 1473 1650 u;1341 1359 1600 1700 d;1449 1510 1600 1680 u;1275 1296 1560 1650 u;1272 1290 1467 1650 d;
      1473 1473 1620 1680 d;1401 1520 1620 1680 u;1476 1540 1640 1700 d;1305 1410 1560 1600 u;1362 1410 1416 1497 u;1380 1404 1461 1500 d;1365 1458 1464 1485 d;1425 1470 1510 1560 d;1449 1449 1540 1560 d;1395 1458 1530 1580 u;
      1404 1455 1494 1560 d;1401 1422 1497 1500 u;1179 1191 1431 1431 u;1101 1131 1194 1236 u;1128 1134 1176 1260 d;1179 1185 1191 1224 d;1194 1194 1227 1239 d;1230 1230 1254 1266 d;1224 1248 1269 1272 d;1209 1263 1272 1284 u;
      1266 1266 1356 1359 d;1335 1353 1356 1383 d;1170 1188 1359 1362 u;1170 1182 1347 1380 d;1329 1350 1690 1720 d;1446 1690 1760 1800 d;1700 1760 1920 2100 d;1850 1900 2080 2290 d;1640 1700 2060 2200 u;1560 1690 1960 2120 u;
      1550 1680 1800 1900 d;1620 1740 1850 1960 u;1434 1640 1760 1900 d;1600 1740 1880 2000 d;1700 1760 1900 1990 u;1650 1760 1920 2060 d;1780 1910 2190 2240 d;2000 2130 2320 2400 d;2180 2290 2400 2480 d;2250 2380 2480 2640 d;
      2260 2300 2460 2500 u;2070 2150 2310 2440 u;1880 1960 2160 2240 u;1850 1900 1990 2150 u;1760 1820 1960 2230 d;1780 1860 2030 2110 d;1840 1880 2010 2080 u;1750 1870 1960 2120 u;1680 1720 1920 1980 u;1620 1660 1780 1900 u;
      1401 1640 1760 1830 d;1560 1600 1760 1820 u;1540 1570 1640 1740 u;1530 1560 1620 1700 d;1491 1520 1600 1650 u;1404 1510 1560 1600 u;1500 1520 1590 1620 d;1473 1488 1600 1650 u;1540 1560 1680 1750 d;1480 1560 1720 1800 d;
      1680 1700 1850 1900 d;1740 1780 1880 1980 d;1760 1840 1870 1960 u;1780 1830 1850 1930 d;1750 1840 1900 1960 u;1790 1850 1880 1950 d;1800 1860 1950 2010 d;1830 1900 1980 2040 u;1800 1860 1900 2000 u;1780 1870 1930 2020 d;
      1850 1900 1990 2050 d;1850 1890 1960 2070 u;1800 1890 1950 1990 d;1820 1870 1910 2000 u;1760 1810 1880 1920 u`;
    const d4 = ['10:00', '12:00', '14:00', '16:00', '18:00', '20:00', '23:00', '01:00', '03:00', '05:00', '07:00', '09:00', '11:00', '13:00', '15:00', '17:00', '19:00', '21:00', '20 mars', '03:00', '05:00', '07:00', '09:00'];
    const x4 = [115, 162, 210, 257, 304, 351, 399, 446, 492, 540, 588, 635, 681, 730, 777, 824, 871, 919, 974, 1037, 1084, 1131, 1179];
    const tag4 = (y, s, bg, c) => rect(1201, y - 9, 57, 17, bg, 'rx="3"') + text(1202, y, s, 14, { b: 1, c });
    put('p4', panelHead({ pct: '0,13 %', delta: '32,15', sell: '23 296,0', buy: '23 298,0', spread: '2,0', title: 'Allemagne 40 - Mar 2025', tabW: 'w-[223px] pl-[7px]', mark: 1, lamp: '#00f57a', slot: 1 }) +
      toolBar({ unit: '30 minutes', q1: ['10s', '1m', '5m'], range: '3 Jours', q2: ['1S', '1Mo', '3Mo'], models: [1, 2, 3, 4, 5], on: 1, mode: 'Achat', modeW: 'w-[74px]', params: 1 }) +
      chart(41, 1296, rect(41, 1296, 1243, 770, '#fff') + rect(41, 1315, 1157, 740, '#fbfbfb') + rect(41, 1313, 1243, 2, '#dcdcdc') + rect(1198, 1313, 2, 760, '#dcdcdc') +
        d4.map((s, i) => text(x4[i], 1305, s, 14, { b: 1, a: 'middle' })).join('') +
        candles(c4, m4, '#17a0b8', '#cf9c1c', 7) +
        line(41, 1199, 1400, '#ffa500', 2) + line(41, 1199, 1636, '#23b5e8', 3) + line(155, 1199, 1648, '#d00', 2, '2 2') + line(41, 1199, 1687.5, '#902020', 1) +
        line(41, 1199, 1789, '#ffa500', 2) + line(41, 1199, 1909.5, '#c98a4a', 1, '5 4') + line(41, 1199, 2028.5, '#f00', 3) +
        text(41, 1649, '-24,9 / -0,11 %', 14, { b: 1, c: '#f00' }) + house(1169, 1321) +
        text(1207, 1348, '23 500,0', 14, { b: 1 }) + text(1207, 1517, '23 400,0', 14, { b: 1 }) + text(1207, 1855, '23 200,0', 14, { b: 1 }) + text(1207, 2023, '23 100,0', 14, { b: 1 }) +
        tag4(1400, '23 469,1', '#ffa500', '#000') + rect(1200, 1620, 84, 20, '#a6adad') + text(1207, 1630, '23 331,8', 14, { b: 1 }) +
        rect(1200, 1639, 84, 17, '#f00') + text(1207, 1648, '23 322,9', 14, { b: 1, c: '#fff' }) + rect(1200, 1676, 84, 22, '#b30000') + text(1205, 1687, '23 298,0', 15, { b: 1, c: '#fff' }) +
        tag4(1789, '23 238,1', '#ffa500', '#000') + tag4(1909, '23 166,9', '#ffa500', '#000') + tag4(2029, '23 096,4', '#f00', '#fff')) +
      footBar());

    // Allemagne 40, 1 minute
    const m5 = { ox: 1920, kx: 1.6333, y: 1080, k: 1.4452 };
    const path5 = `61,790 66,805 72,795 77,810 83,760 88,710 95,705 100,670 104,625 109,650 115,690 125,725 133,720 140,700 149,675 157,705 162,730 172,705 178,680 187,655 192,630 207,620 209,520 217,530 222,510 230,515 236,565 240,515 248,430 262,435 268,350 272,380 277,305 283,360 291,395 299,375 305,405 313,410 322,400 330,395 336,340 343,335 352,355 359,400 368,345 382,355 388,300 397,335 405,300 432,300 438,235 445,220 452,205 468,205 474,215 480,245 484,300 492,325 502,355 512,330 519,370 532,405 541,370 553,345 560,400 572,430 582,420 592,435 602,445 612,440 622,410 634,390 650,390 666,420 674,405 686,395 695,370 710,375 728,370 738,340 755,345 770,335 790,340 793,295 804,292 806,510 811,540 817,505 827,530 838,475 845,515 852,445 866,410 875,425 886,490 891,370 903,325 912,340 920,405 927,390 935,450 942,450 948,405 962,380 970,410 980,455 1002,462 1006,540 1020,565 1025,650 1040,680 1046,630 1053,560 1062,520 1072,515 1083,595 1091,555 1100,620 1112,610 1117,570 1125,575 1135,630 1141,675 1146,755 1158,775 1170,775 1180,775 1192,750 1203,752 1208,880 1221,855 1225,880 1240,882 1258,880 1262,905 1267,800 1272,805 1282,885 1290,775 1302,750 1313,770 1328,805 1340,790 1352,745 1362,750 1368,805 1376,805 1382,750 1398,780 1405,840 1412,810 1422,790 1428,815 1440,860 1452,855 1470,870 1490,870 1498,805 1510,825 1522,885 1538,878 1550,815 1567,810`;
    const path5b = `2,805 8,765 20,740 27,685 38,675 48,680 57,690 63,740 75,765 85,785 95,820 103,860 108,820 118,785 125,780 131,830 137,900 146,990 155,980 165,1025 168,960 180,970 196,945 208,958 230,970 240,950 270,950 285,940 295,885 315,862 322,905 332,860 345,900 355,945 362,970 372,955 388,975 398,910 410,870 425,845 435,808 445,835 455,815 465,895 475,885 488,950 497,970 513,965 516,1060 525,1070 532,1125 536,1040 545,1030 560,1050 570,1050 585,1020 600,965 618,945 632,1000 642,995 650,955 662,1010 672,970 682,915 692,925 698,865 705,940 715,880 728,855 735,800 742,850 755,815 768,775 785,785 795,700 800,735 804,697 815,770 825,725 835,745 845,790 858,765 866,785 872,880 890,880 895,840 903,870 914,890 925,940 935,980 958,985 966,870 975,880 985,980 993,1060 1000,1105 1010,1080 1022,1095 1028,1115 1035,1185 1043,1080 1050,1020 1058,1020 1065,970 1072,870 1078,820 1085,850 1092,800 1100,870 1112,935 1120,940 1125,1035 1132,1010 1145,1090 1152,1000 1162,940 1170,1050 1176,905 1188,900 1195,970 1210,1025 1222,1065 1228,1030 1232,1060 1238,985 1255,990 1262,985 1268,1030 1280,1065 1285,830 1297,780 1308,805 1318,770 1330,810 1337,905 1345,810 1352,850 1360,730 1368,810 1378,850 1388,980 1396,1005 1400,905 1406,780 1412,740 1416,780`;
    // isolated long wicks: x, top, bottom
    const spikes = [[3619, 1556, 1600, '#daa830'], [3552, 1604, 1650, '#daa830'], [3629, 1780, 1863, '#1b7fb0'], [3583, 1786, 1864, '#1b7fb0'], [3702, 1550, 1700, '#1b7fb0'], [3714, 1548, 1670, '#1b7fb0'], [3699, 1640, 1738, '#daa830'], [3711, 1580, 1675, '#daa830'], [3720, 1588, 1705, '#daa830'],
      [3732, 1690, 1784, '#daa830'], [3736, 1700, 1777, '#1b7fb0'], [3739, 1660, 1743, '#1b7fb0'], [3748, 1569, 1620, '#daa830'], [3229, 1780, 1843, '#1b7fb0'], [3329, 1615, 1676, '#1b7fb0'], [2712, 1569, 1630, '#1b7fb0'], [2667, 1664, 1712, '#1b7fb0'], [2404, 1264, 1320, '#1b7fb0'], [2349, 1305, 1345, '#999'], [2047, 1415, 1520, '#1b7fb0']];
    const d5 = [[2067, '23:00'], [2258, '20 mars'], [2434, '01:15'], [2555, '02:00'], [2729, '03:00'], [2886, '04:00'], [3023, '05:00'], [3184, '06:02'], [3355, '07:00'], [3539, '08:00'], [3722, '09:00']];
    put('p5', panelHead({ ...quote, title: 'Allemagne 40', tabW: 'w-[161px] pl-[7px]', mark: 1, lamp: '#00d8f5', slot: 0, size: 'shrink' }) +
      toolBar({ unit: '1 minute', q1: ['10s', '1m', '5m'], range: '12 heures', q2: ['1S', '1Mo'], models: [1, 2, 3, 4, 5], mode: 'Vente', modeW: 'w-[74px]', params: 1 }) +
      chart(1956, 1202, grad('bg5', '#fafafa', '#ffffff') + rect(1956, 1202, 1890, 950, '#fff') + rect(1956, 1221, 1890, 921, 'url(#bg5)') +
        pathCandles(path5, m5, 5, 3, '#1b7fb0', '#daa830', 9) + pathCandles(path5b, { ...m5, ox: 2880, kx: 1.63 }, 5, 3, '#1b7fb0', '#daa830', 9) +
        spikes.map(([x, a, b, c]) => rect(x, a, 1, b - a, c)).join('') +
        rect(1956, 1202, 1883, 17, '#fff') + dates(d5, 1211, 14, 0) +
        rect(1956, 1219, 1883, 2, '#dcdcdc') + rect(3757, 1219, 2, 925, '#dcdcdc') +
        line(2061, 3757, 1523.5, '#d00', 1, '2 2') + line(1956, 3757, 1619.5, '#555', 1) + line(1956, 3757, 1660, '#2cff2c', 4) + line(1956, 3757, 1676, '#00dcff', 2) + line(1956, 3757, 2102, '#ffa500', 4, '2 2') +
        text(1957, 1525, '-17,82 / -0,08 %', 14, { c: '#f00' }) + house(3751, 1227) +
        ['23 370,00', '23 340,00', '23 310,00', '23 280,00', '23 250,00', '23 220,00'].map((s, i) => text(3766, 1243 + i * 163, s, 14, { c: '#222' })).join('') +
        rect(3758, 1513, 81, 19, '#f00') + text(3765, 1523, '23 318,44', 14, { b: 1, c: '#fff' }) + rect(3758, 1606, 81, 24, '#b30000') + text(3762, 1619, '23 300,62', 15, { b: 1, c: '#fff' }) +
        rect(3760, 1650, 65, 18, '#2cff2c', 'rx="3"') + text(3761, 1660, '23 293,23', 14) + rect(3760, 1667, 65, 17, '#00dcff', 'rx="3"') + text(3761, 1676, '23 290,16', 14) +
        rect(3758, 1974, 81, 20, '#a6adab') + text(3767, 1985, '23 233,03', 14, { b: 1 }) + rect(3760, 2093, 65, 17, '#ffa500', 'rx="3"') + text(3761, 2102, '23 211,85', 14)) +
      footBar());

    // ---------- quote tiles ----------
    function ticker(t) {
      const c = t.up ? 'text-[#14e32c]' : 'text-[#ff4040]';
      const price = p => `<span class="text-[26px] leading-8">${p[0]}</span><span class="text-[20px]">${p[1]}</span>`;
      return `
      <article class="min-w-0 shadow-[0_0_6px_#000] ${t.cls || ''}">
        <div class="border-b border-black"><div class="${head}">
          <button aria-label="Menu" class="flex w-[31px] shrink-0 items-center justify-center border-r border-[#22262a] text-[#c4c7ca]">${icon('menu-s', 'h-3 w-3')}</button>
          <div class="flex w-[87px] shrink-0 items-center gap-1 border-r border-[#22262a] bg-[#33373c] pl-1">
            <span class="flex h-4 w-7 shrink-0 items-center justify-center rounded bg-[#00505c] text-[11px]">CFD</span>
            <div class="text-[10px] leading-[11px] whitespace-nowrap">${t.name}<br>Mar 2025</div>
          </div>
          <div class="w-[31px] border-r border-[#22262a]"></div>
          <div class="flex flex-1 flex-col justify-center pr-[7px] text-right leading-[13px] ${c}">
            <div class="flex items-center justify-end gap-1">${icon(t.up ? 'tri-u' : 'tri-d', 'h-[9px] w-[10px]')}<span>${t.pct}</span></div><div>${t.delta}</div>
          </div>
          ${meter()}
          <button aria-label="Fermer" class="flex w-7 items-center justify-center text-[#9da1a5]">${icon('close', 'h-3 w-3')}</button>
        </div></div>
        <div class="relative grid h-[75px] grid-cols-2 bg-linear-to-b from-[#393d43] to-[#212529] text-[11px] leading-3">
          <button class="flex flex-col justify-between border-r border-black px-[5px] pt-[2px] pb-[3px] text-left"><span class="pl-[2px] text-[#b87400]">VENDRE</span><span class="self-center">${price(t.sell)}</span><span class="text-[#85898e]">B:${t.lo}</span></button>
          <button class="flex flex-col justify-between px-[5px] pt-[2px] pb-[3px] text-right"><span class="pr-[2px] text-[#0e9ab0]">ACHETER</span><span class="self-center">${price(t.buy)}</span><span class="text-[#85898e]">H:${t.hi}</span></button>
          <span class="absolute top-[3px] left-1/2 flex h-[15px] -translate-x-1/2 items-center border-x border-b border-black bg-[#33373c] px-2 text-[12px] text-[#c2c5c8]">${t.spread}</span>
          <label class="absolute bottom-0 left-1/2 flex h-[17px] w-[82px] -translate-x-1/2 items-center border-t border-r border-black bg-[#2d343d]">
            <span class="sr-only">Quantité</span>
            <select class="h-4 w-[63px] appearance-none bg-[#003a45] p-0 text-center text-[12px] leading-4"><option>-</option></select>
            <span class="flex flex-1 justify-center text-[#a5a9ad]">${icon('chev-d-b', 'h-[10px] w-[10px]')}</span>
          </label>
        </div>
      </article>`;
    }
    put('tickers-a', [
      { name: 'US SP...', up: 1, pct: '0,42 %', delta: '24,38', sell: ['5704,7', '8'], buy: ['5705,4', '8'], spread: '7,0', lo: '5 679,90', hi: '5 708,48' },
      { name: 'US N...', up: 1, pct: '0,55 %', delta: '109,75', sell: ['19855,', '88'], buy: ['19858,', '88'], spread: '3,00', lo: '19 745,50', hi: '19 886,88' },
      { name: 'US 30', up: 1, pct: '0,33 %', delta: '139', sell: ['42133,', '5'], buy: ['42137,', '5'], spread: '4,0', lo: '41 988,0', hi: '42 140,0' },
      { name: 'Allema...', up: 0, pct: '0,13 %', delta: '32,15', sell: ['23296,', '0'], buy: ['23298,', '0'], spread: '2,0', lo: '23 242,5', hi: '23 382,0', cls: 'col-start-5' }
    ].map(ticker).join(''));
    put('tickers-b', [
      { name: 'France 40', up: 0, pct: '0,25 %', delta: '20,75', sell: ['8163,', '0'], buy: ['8165,', '0'], spread: '2,0', lo: '8 150,8', hi: '8 177,8' },
      { name: 'UK 100', up: 1, pct: '0,21 %', delta: '18,6', sell: ['8735,', '5'], buy: ['8737,', '5'], spread: '2,0', lo: '8 696,0', hi: '8 740,5' }
    ].map(ticker).join(''));

    // ---------- watch lists ----------
    function watchList(w) {
      const row = ([name, up, pct, delta, sell, buy, tick], i) => {
        const c = up ? 'text-[#0be322]' : 'text-[#ff3b3b]';
        return `
        <tr class="h-5 ${i % 2 ? 'bg-black' : 'bg-[#111822]'}">
          <td class="py-0 pl-2"><span class="flex items-center gap-[5px]">${icon('dots', 'h-4 w-4')}${name}</span></td>
          <td class="border-l border-[#2a2f35] px-0 py-0 font-bold ${c}"><span class="flex items-center gap-1 pr-[6px] pl-[9px]">${icon(up ? 'tri-u' : 'tri-d', `h-2 w-[9px] ${up ? 'text-[#0be322]' : 'text-[#f00]'}`)}${pct}<span class="ml-auto">${delta}</span></span></td>
          <td class="relative py-0 pr-3 text-right ${i % 2 ? 'bg-[#201a15]' : 'bg-[#21241f]'}">${sell}${tick ? `<span class="absolute top-[6px] right-[2px]">${icon(tick === 'u' ? 'tri-u' : 'tri-d', `h-[7px] w-[7px] ${tick === 'u' ? 'text-[#0be322]' : 'text-[#ff3b3b]'}`)}</span>` : ''}</td>
          <td class="py-0 pr-[13px] text-right ${i % 2 ? 'bg-[#051b1f]' : 'bg-[#0e2431]'}">${buy}</td>
        </tr>`;
      };
      return `
      <article class="shadow-[0_0_6px_#000]">
        <div class="border-b border-black"><div class="${head}">
          <button aria-label="Menu" class="flex w-[31px] items-center justify-center border-r border-[#22262a] text-[#c4c7ca]">${icon('menu-s', 'h-3 w-3')}</button>
          <div class="flex items-center gap-2 border-r border-[#22262a] bg-[#33373c] pr-[6px] pl-2 text-[#8d9296]"><span class="text-white">${w.title}</span>${icon('chev-d', 'h-[11px] w-[11px]')}${icon('zoom', 'h-4 w-4')}</div>
          <div class="flex flex-1 items-center pl-[10px] text-[#85898e]">${icon('plus', 'h-3 w-3')}</div>
          <div class="flex items-start gap-[9px] pr-2 text-[#b5b8bb]">${meter('#00f57a', 1)}<div class="flex h-full items-center gap-[10px]">${icon('expand', 'h-3 w-3')}${icon('close', 'h-3 w-3')}</div></div>
        </div></div>
        <table class="w-full table-fixed border-collapse">
          <colgroup><col><col class="w-[110px]"><col class="w-[75px]"><col class="w-[75px]"></colgroup>
          <thead><tr class="h-6 border-b border-black bg-[#15181c] text-[10px] text-[#a9adb1]">
            <th class="py-0 pl-[6px] text-left font-normal"><span class="flex items-center gap-2">PRODUIT${icon('sort', 'h-[10px] w-2')}</span></th>
            <th class="border-l border-[#2a2f35] py-0 pl-[9px] text-left font-normal"><span class="flex items-center gap-[6px]">PERFORMANCE${icon('sort', 'h-[10px] w-2')}</span></th>
            <th class="border-l border-[#2a2f35] py-0 pr-[6px] text-right text-[#c07800]">VENTE</th>
            <th class="py-0 pr-[7px] text-right text-[#109bb5]">ACHAT</th>
          </tr></thead>
          <tbody>${w.rows.map(row).join('')}</tbody>
        </table>
        <div class="${w.fill} bg-[#262b32]"></div>
        ${w.classic ? `<div class="flex h-5 justify-end border-t border-black bg-[#363b41]"><button class="flex items-center gap-[6px] border-l border-black px-2">Vue Classique ${icon('tri-u', 'h-[7px] w-[7px] text-[#8d9296]')}</button></div>` : ''}
      </article>`;
    }
    put('lists', [
      { title: 'Indices', fill: 'h-3', classic: 1, rows: [
        ['US SPX 500 - Mar 2025', 1, '0,42 %', '24,38', '5 704,78', '5 705,48'], ['US NDAQ 100 - Mar 2025', 1, '0,55 %', '109,75', '19 855,88', '19 858,88'],
        ['US 30 - Mar 2025', 1, '0,33 %', '139', '42 133,5', '42 137,5'], ['US Small Cap 2000 - Mar 2025', 1, '0,36 %', '7,65', '2 092,00', '2 093,50'],
        ['Euro 50 - Mar 2025', 0, '0,06 %', '3,65', '5 507,5', '5 509,5'], ['Allemagne 40 - Mar 2025', 0, '0,13 %', '32,15', '23 296,0', '23 298,0'],
        ['France 40 - Mar 2025', 0, '0,25 %', '20,75', '8 163,0', '8 165,0'], ['UK 100 - Mar 2025', 1, '0,21 %', '18,6', '8 735,5', '8 737,5']] },
      { title: 'Asie', fill: 'h-[34px]', rows: [
        ['Hong Kong 50 - Mar 2025', 0, '1,86 %', '461', '24 258,5', '24 266,5', 'd'], ['Chine A50 - Mar 2025', 0, '1,01 %', '139,5', '13 606,5', '13 616,5'], ['Japon 225 - Juin 2025', 0, '0,15 %', '57,5', '37 612,5', '37 632,5']] },
      { title: 'Obligations', fill: 'h-[26px]', classic: 1, rows: [
        ['US Dollar Index - Juin 2025', 1, '0,19 %', '0,2005', '103,273', '103,303'], ['EUR/USD', 0, '0,27 %', '30,05', '1,08753', '1,08759'],
        ['US T-Note 2 YR - Juin 2025', 0, '0,01 %', '1,6', '103,472', '103,492'], ['US T-Note 5 YR - Jui 2024', 0, '0,02 %', '2,3', '107,916', '107,936'],
        ['US T-Note 10 YR - Juin 2025', 0, '0,01 %', '1,6', '111,050', '111,090'], ['Euro OAT - Juin 2025', 1, '0,11 %', '14', '122,545', '122,585'],
        ['Euro Bund - Juin 2025', 0, '0,14 %', '18', '128,281', '128,309'], ['Volatility Index - Avr 2025', 0, '1,39 %', '0,275', '19,375', '19,475']] },
      { title: 'mMatières premières', fill: 'h-[14px]', rows: [
        ['Or', 0, '0,16 %', '4,895', '3 042,75', '3 043,06', 'u'], ['Cuivre - Mai 2025', 1, '0,31 %', '16,2', '513,50', '513,90'],
        ['Pétrole US Brut Léger - Mai 2025', 1, '0,68 %', '46,05', '67,478', '67,513'], ['Pétrole Brut Brent - Mai 2025', 1, '0,74 %', '52,55', '71,368', '71,403']] }
    ].map(watchList).join(''));
  </script>
</body>
</html>
